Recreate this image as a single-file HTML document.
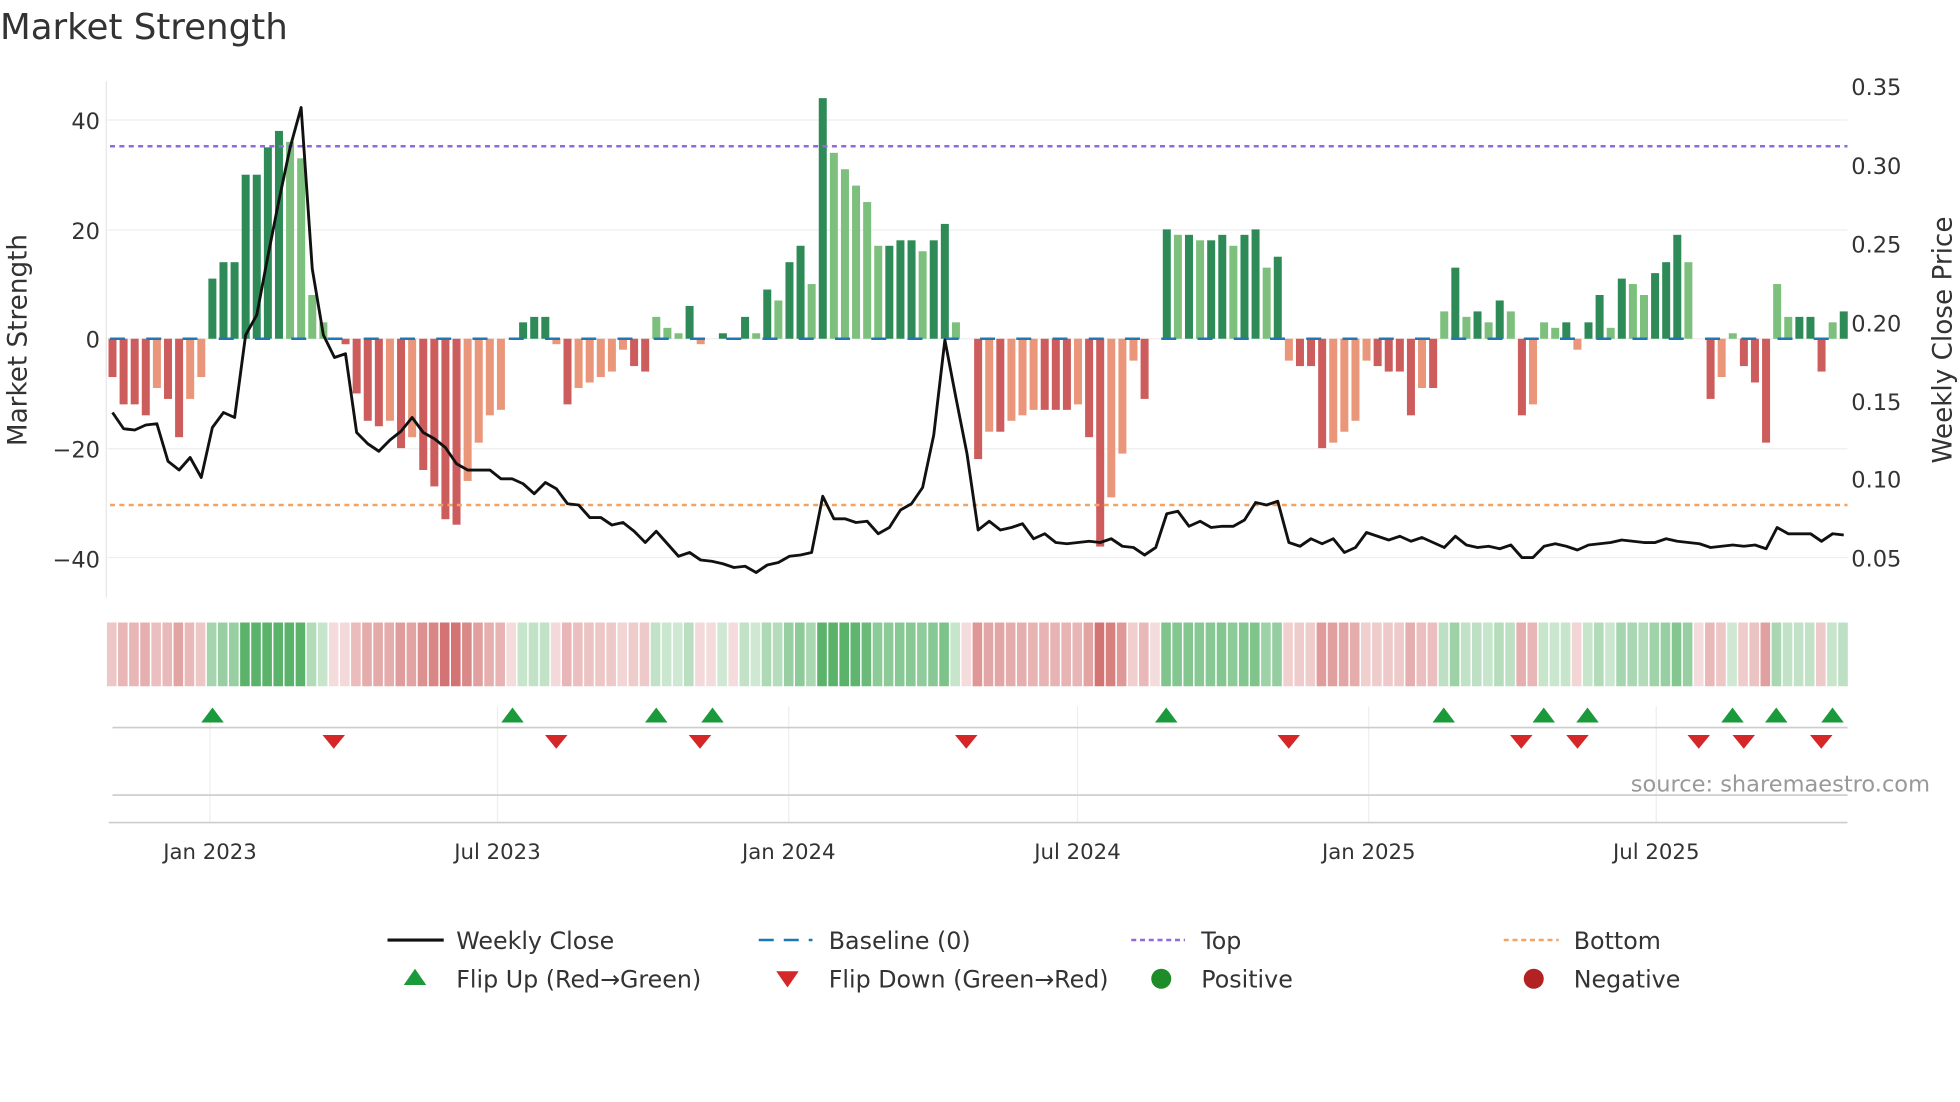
<!DOCTYPE html>
<html><head><meta charset="utf-8"><style>
html,body{margin:0;padding:0;background:#fff;width:1960px;height:1102px;overflow:hidden}
svg{display:block}
text{font-family:"DejaVu Sans","Liberation Sans",sans-serif;fill:#333}
</style></head><body>
<svg id="s" width="1960" height="1102" viewBox="0 0 1568 881.6" xmlns="http://www.w3.org/2000/svg">
<text x="0" y="31" font-size="28.5">Market Strength</text>
<g id="grid"></g>
<g id="bars"></g>
<g id="heat"></g>
<g id="rest"></g>
<text transform="translate(21,272) rotate(-90)" font-size="21" text-anchor="middle">Market Strength</text>
<text transform="translate(1561,272) rotate(-90)" font-size="21" text-anchor="middle">Weekly Close Price</text>
<g font-size="18">
<text x="80" y="103" text-anchor="end">40</text>
<text x="80" y="191" text-anchor="end">20</text>
<text x="80" y="278" text-anchor="end">0</text>
<text x="80" y="366" text-anchor="end">−20</text>
<text x="80" y="454" text-anchor="end">−40</text>
<text x="1481" y="76">0.35</text>
<text x="1481" y="139">0.30</text>
<text x="1481" y="202">0.25</text>
<text x="1481" y="265">0.20</text>
<text x="1481" y="328">0.15</text>
<text x="1481" y="390">0.10</text>
<text x="1481" y="453">0.05</text>
</g>
<g font-size="17" text-anchor="middle">
<text x="168" y="687">Jan 2023</text><text x="398" y="687">Jul 2023</text><text x="631" y="687">Jan 2024</text><text x="862" y="687">Jul 2024</text><text x="1095" y="687">Jan 2025</text><text x="1325" y="687">Jul 2025</text>
</g>
<text x="1544" y="633" font-size="18" text-anchor="end" style="fill:#999">source: sharemaestro.com</text>
<g font-size="19">
<line x1="310" y1="752" x2="355" y2="752" stroke="#111" stroke-width="2.5"/><text x="365" y="759">Weekly Close</text>
<line x1="607" y1="752" x2="650" y2="752" stroke="#1f77b4" stroke-width="2" stroke-dasharray="12,8"/><text x="663" y="759">Baseline (0)</text>
<line x1="905" y1="752" x2="948" y2="752" stroke="#9467db" stroke-width="2" stroke-dasharray="4,3"/><text x="961" y="759">Top</text>
<line x1="1203" y1="752" x2="1247" y2="752" stroke="#f4a261" stroke-width="2" stroke-dasharray="4,3"/><text x="1259" y="759">Bottom</text>
<polygon points="332,775 323,788 341,788" fill="#1a9a3a"/><text x="365" y="790">Flip Up (Red→Green)</text>
<polygon points="630,790 621,777 639,777" fill="#d62728"/><text x="663" y="790">Flip Down (Green→Red)</text>
<circle cx="929" cy="783" r="8" fill="#1e8c28"/><text x="961" y="790">Positive</text>
<circle cx="1227" cy="783" r="8" fill="#b22222"/><text x="1259" y="790">Negative</text>
</g>
</svg>
<script>
var v=[-7,-12,-12,-14,-9,-11,-18,-11,-7,11,14,14,30,30,35,38,36,33,8,3,0,-1,-10,-15,-16,-15,-20,-18,-24,-27,-33,-34,-26,-19,-14,-13,0,3,4,4,-1,-12,-9,-8,-7,-6,-2,-5,-6,4,2,1,6,-1,0,1,0,4,1,9,7,14,17,10,44,34,31,28,25,17,17,18,18,16,18,21,3,0,-22,-17,-17,-15,-14,-13,-13,-13,-13,-12,-18,-38,-29,-21,-4,-11,0,20,19,19,18,18,19,17,19,20,13,15,-4,-5,-5,-20,-19,-17,-15,-4,-5,-6,-6,-14,-9,-9,5,13,4,5,3,7,5,-14,-12,3,2,3,-2,3,8,2,11,10,8,12,14,19,14,0,-11,-7,1,-5,-8,-19,10,4,4,4,-6,3,5];
var p=[330,343,344,340,339,369,376,366,382,342,330,334,268,252,205,160,118,86,215,268,286,283,346,355,361,352,345,334,346,351,358,371,376,376,376,383,383,387,395,386,391,403,404,414,414,420,418,425,434,425,435,445,442,448,449,451,454,453,458,452,450,445,444,442,397,415,415,418,417,427,422,408,403,390,348,272,318,363,424,417,424,422,419,431,427,434,435,434,433,434,431,437,438,444,438,411,409,421,417,422,421,421,416,402,404,401,434,437,431,435,431,442,438,426,429,432,429,433,430,434,438,429,436,438,437,439,436,446,446,437,435,437,440,436,435,434,432,433,434,434,431,433,434,435,438,437,436,437,436,439,422,427,427,427,433,427,428];
var N=v.length,x0=90,dx=(1475-90)/(N-1),z=271,k=4.375;
function X(i){return x0+dx*i}
var g='';
[96,184,271,359,446].forEach(function(y){g+='<line x1="86" x2="1478" y1="'+y+'" y2="'+y+'" stroke="#eee" stroke-width="1"/>'});
g+='<line x1="85" x2="85" y1="65" y2="478" stroke="#e6e6e6"/>';
[168,398,631,862,1095,1325].forEach(function(x){g+='<line x1="'+x+'" x2="'+x+'" y1="565" y2="658" stroke="#eee"/>'});
g+='<line x1="90" x2="1478" y1="582" y2="582" stroke="#ccc" stroke-width="1.3"/><line x1="90" x2="1478" y1="636" y2="636" stroke="#ccc" stroke-width="1.3"/><line x1="87" x2="1478" y1="658" y2="658" stroke="#ccc" stroke-width="1.3"/>';
document.getElementById('grid').innerHTML=g;
var b='',h='';
for(var i=0;i<N;i++){var a=v[i],pa=i?Math.abs(v[i-1]):0,dark=Math.abs(a)>=pa;var c;
if(a>0)c=dark?'#2e8b57':'#7dbf7d';else c=dark?'#cd5c5c':'#e9967a';
var y=a>0?z-a*k:z,hh=Math.max(Math.abs(a)*k,a==0?0:1.5);
if(a!=0)b+='<rect x="'+(X(i)-3.2)+'" y="'+y+'" width="6.4" height="'+hh+'" fill="'+c+'"/>';
var al=Math.min(0.22+Math.abs(a)/50,0.8);
var hc=a>0?'rgba(50,160,70,'+al+')':'rgba(200,80,80,'+Math.min(0.2+Math.abs(a)/55,0.8)+')';
h+='<rect x="'+(X(i)-dx/2)+'" y="498" width="'+(dx-1.2)+'" height="51" fill="'+hc+'"/>';}
b+='<line x1="88" x2="1478" y1="271" y2="271" stroke="#1f77b4" stroke-width="2" stroke-dasharray="12,17"/>';
b+='<line x1="88" x2="1478" y1="117" y2="117" stroke="#9467db" stroke-width="2" stroke-dasharray="4,3.5"/>';
b+='<line x1="88" x2="1478" y1="404" y2="404" stroke="#f4a261" stroke-width="2" stroke-dasharray="4,3.5"/>';
var pts=p.map(function(y,i){return X(i).toFixed(1)+','+y}).join(' ');
b+='<polyline points="'+pts+'" fill="none" stroke="#111" stroke-width="2.3" stroke-linejoin="round"/>';
document.getElementById('bars').innerHTML=b;document.getElementById('heat').innerHTML=h;
var r='';
[170,410,525,570,933,1155,1235,1270,1386,1421,1466].forEach(function(x){r+='<polygon points="'+x+',566 '+(x-9)+',578 '+(x+9)+',578" fill="#1a9a3a"/>'});
[267,445,560,773,1031,1217,1262,1359,1395,1457].forEach(function(x){r+='<polygon points="'+x+',599 '+(x-9)+',588 '+(x+9)+',588" fill="#d62728"/>'});
document.getElementById('rest').innerHTML=r;
</script>
</body></html>
